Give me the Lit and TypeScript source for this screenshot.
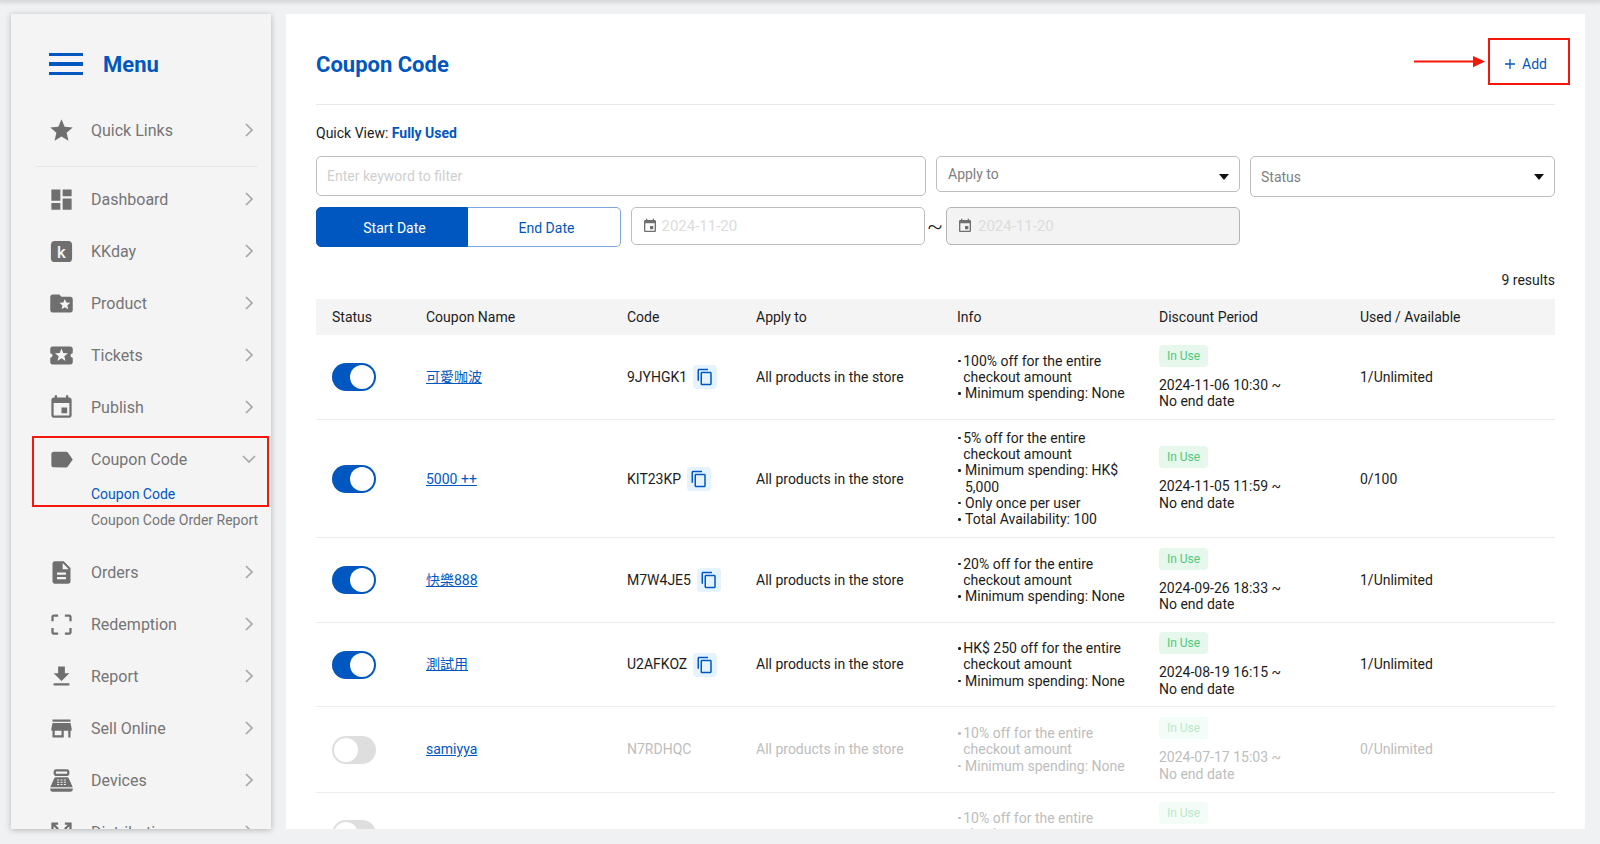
import { LitElement, html, css, svg } from "lit";
import { customElement } from "lit/decorators.js";
import { styleMap } from "lit/directives/style-map.js";

const ICONS: Record<string, unknown> = {
  star: svg`<path d="M12 17.27L18.18 21l-1.64-7.03L22 9.24l-7.19-.61L12 2 9.19 8.63 2 9.24l5.46 4.73L5.82 21z"/>`,
  dashboard: svg`<path d="M3 13h8V3H3v10zm0 8h8v-6H3v6zm10 0h8V11h-8v10zm0-18v6h8V3h-8z"/>`,
  kkday: svg`<rect x="2.6" y="2.6" width="18.8" height="18.8" rx="3.5"/><text x="12" y="17.6" text-anchor="middle" font-family="Roboto, sans-serif" font-weight="500" font-size="15" fill="#f4f4f5">k</text>`,
  product: svg`<path d="M20 6h-8l-2-2H4c-1.1 0-1.99.9-1.99 2L2 18c0 1.1.9 2 2 2h16c1.1 0 2-.9 2-2V8c0-1.1-.9-2-2-2zm-2.06 11L15 15.28 12.06 17l.78-3.33-2.59-2.24 3.41-.29L15 8l1.34 3.14 3.41.29-2.59 2.24.78 3.33z"/>`,
  tickets: svg`<path d="M20 12c0-1.1.9-2 2-2V6c0-1.1-.9-2-2-2H4c-1.1 0-1.99.9-1.99 2v4c1.1 0 1.99.9 1.99 2s-.89 2-2 2v4c0 1.1.9 2 2 2h16c1.1 0 2-.9 2-2v-4c-1.1 0-2-.9-2-2zm-4.42 4.8L12 14.5l-3.58 2.3 1.08-4.12-3.29-2.69 4.24-.25L12 5.8l1.54 3.95 4.24.25-3.29 2.69 1.09 4.11z"/>`,
  event: svg`<path d="M17 12h-5v5h5v-5zM16 1v2H8V1H6v2H5c-1.11 0-1.99.9-1.99 2L3 19c0 1.1.89 2 2 2h14c1.1 0 2-.9 2-2V5c0-1.1-.9-2-2-2h-1V1h-2zm3 18H5V8h14v11z"/>`,
  label: svg`<path d="M17.63 5.84C17.27 5.33 16.67 5 16 5L5 5.01C3.9 5.01 3 5.9 3 7v10c0 1.1.9 1.99 2 1.99L16 19c.67 0 1.27-.33 1.63-.84L22 12l-4.37-6.16z"/>`,
  orders: svg`<path d="M14 2H6c-1.1 0-1.99.9-1.99 2L4 20c0 1.1.89 2 1.99 2H18c1.1 0 2-.9 2-2V8l-6-6zm2 16H8v-2h8v2zm0-4H8v-2h8v2zm-3-5V3.5L18.5 9H13z"/>`,
  crop: svg`<path d="M3 5v4h2V5h4V3H5c-1.1 0-2 .9-2 2zm2 10H3v4c0 1.1.9 2 2 2h4v-2H5v-4zm14 4h-4v2h4c1.1 0 2-.9 2-2v-4h-2v4zm0-16h-4v2h4v4h2V5c0-1.1-.9-2-2-2z"/>`,
  report: svg`<path d="M19 9h-4V3H9v6H5l7 7 7-7zM5 18v2h14v-2H5z"/>`,
  store: svg`<path d="M20 4H4v2h16V4zm1 10v-2l-1-5H4l-1 5v2h1v6h10v-6h4v6h2v-6h1zm-9 4H6v-4h6v4z"/>`,
  devices: svg`<path d="M17 2H7c-1.1 0-2 .9-2 2v2c0 1.1.9 2 2 2h10c1.1 0 2-.9 2-2V4c0-1.1-.9-2-2-2zm0 4H7V4h10v2zm3 16H4c-1.1 0-2-.9-2-2v-1h20v1c0 1.1-.9 2-2 2zM18.53 10.19C18.21 9.47 17.49 9 16.7 9H7.3c-.79 0-1.51.47-1.83 1.19L2 18h20l-3.47-7.81zM9.5 16h-1c-.28 0-.5-.22-.5-.5s.22-.5.5-.5h1c.28 0 .5.22.5.5s-.22.5-.5.5zm0-2h-1c-.28 0-.5-.22-.5-.5s.22-.5.5-.5h1c.28 0 .5.22.5.5s-.22.5-.5.5zm0-2h-1c-.28 0-.5-.22-.5-.5s.22-.5.5-.5h1c.28 0 .5.22.5.5s-.22.5-.5.5zm3 4h-1c-.28 0-.5-.22-.5-.5s.22-.5.5-.5h1c.28 0 .5.22.5.5s-.22.5-.5.5zm0-2h-1c-.28 0-.5-.22-.5-.5s.22-.5.5-.5h1c.28 0 .5.22.5.5s-.22.5-.5.5zm0-2h-1c-.28 0-.5-.22-.5-.5s.22-.5.5-.5h1c.28 0 .5.22.5.5s-.22.5-.5.5zm3 4h-1c-.28 0-.5-.22-.5-.5s.22-.5.5-.5h1c.28 0 .5.22.5.5s-.22.5-.5.5zm0-2h-1c-.28 0-.5-.22-.5-.5s.22-.5.5-.5h1c.28 0 .5.22.5.5s-.22.5-.5.5zm0-2h-1c-.28 0-.5-.22-.5-.5s.22-.5.5-.5h1c.28 0 .5.22.5.5s-.22.5-.5.5z"/>`,
  distribution: svg`<path d="M3 3h6v2H6.4l3.3 3.3-1.4 1.4L5 6.4V9H3V3zm12 0h6v6h-2V6.4l-3.3 3.3-1.4-1.4L17.6 5H15V3zM3 15h2v2.6l3.3-3.3 1.4 1.4L6.4 19H9v2H3v-6zm16 0h2v6h-6v-2h2.6l-3.3-3.3 1.4-1.4 3.3 3.3V15z"/>`,
};

const icon = (n: string) => html`<svg class="ico" viewBox="0 0 24 24" aria-hidden="true">${ICONS[n]}</svg>`;
const chevron = (open = false) =>
  html`<svg class="chev" viewBox="0 0 24 24" aria-hidden="true">
    ${open ? svg`<polyline points="6,9 12,15 18,9"/>` : svg`<polyline points="9,6 15,12 9,18"/>`}
  </svg>`;

interface Row {
  on: boolean;
  name: string;
  code: string;
  info: string[];
  start: string;
  used: string;
  h: number;
}

const rows: Row[] = [
  { on: true, name: "可愛咖波", code: "9JYHGK1", info: ["100% off for the entire checkout amount", "Minimum spending: None"], start: "2024-11-06 10:30", used: "1/Unlimited", h: 85.2 },
  { on: true, name: "5000 ++", code: "KIT23KP", info: ["5% off for the entire checkout amount", "Minimum spending: HK$ 5,000", "Only once per user", "Total Availability: 100"], start: "2024-11-05 11:59", used: "0/100", h: 118 },
  { on: true, name: "快樂888", code: "M7W4JE5", info: ["20% off for the entire checkout amount", "Minimum spending: None"], start: "2024-09-26 18:33", used: "1/Unlimited", h: 84.8 },
  { on: true, name: "測試用", code: "U2AFKOZ", info: ["HK$ 250 off for the entire checkout amount", "Minimum spending: None"], start: "2024-08-19 16:15", used: "1/Unlimited", h: 84.2 },
  { on: false, name: "samiyya", code: "N7RDHQC", info: ["10% off for the entire checkout amount", "Minimum spending: None"], start: "2024-07-17 15:03", used: "0/Unlimited", h: 85.7 },
];

@customElement("app-root")
export class AppRoot extends LitElement {
  static styles = css`
    :host {
      display: block;
      position: relative;
      height: 844px;
      overflow: hidden;
      background: #f0f1f3;
      font-family: Roboto, "Noto Sans CJK TC", sans-serif;
      font-size: 14px;
      color: #1c1c1c;
    }
    .topshade { height: 0; box-shadow: 0 0 4px 2px rgba(0, 0, 0, 0.16); }
    .page {
      display: flex;
      gap: 15px;
      height: 844px;
      box-sizing: border-box;
      padding: 14px 15px 15px 11px;
    }
    .side {
      width: 260px;
      flex: none;
      background: #f4f4f5;
      box-shadow: 0 1px 6px rgba(0, 0, 0, 0.25);
      box-sizing: border-box;
      padding: 24px 15px 0 38px;
      overflow: hidden;
    }
    .menu { display: flex; align-items: center; gap: 20px; height: 52px; margin-bottom: 14px; }
    .burger { width: 34px; display: flex; flex-direction: column; gap: 6px; }
    .burger i { display: block; height: 3.5px; background: #0057bf; }
    .menu b { font-size: 22px; font-weight: 700; color: #0057bf; }
    .item { display: flex; align-items: center; height: 52px; color: #757575; font-size: 16px; }
    .ico { width: 27px; height: 27px; fill: #6f6f6f; flex: none; margin: 0 16.5px 0 -1.5px; }
    .item span { flex: 1; white-space: nowrap; }
    .chev { width: 24px; height: 24px; fill: none; stroke: #a8a8a8; stroke-width: 1.7; flex: none; margin-right: -5px; }
    .rule { height: 1px; background: #e4e4e4; margin: 10px -1px 6px -13px; }
    .subs { margin: -4px -8px 13px 42px; font-size: 14px; color: #757575; }
    .subs div { height: 26px; line-height: 26px; white-space: nowrap; }
    .subs .cur { color: #0057bf; }
    .main {
      flex: 1;
      min-width: 0;
      background: #fff;
      box-sizing: border-box;
      padding: 0 30px;
      overflow: hidden;
    }
    .head {
      display: flex;
      align-items: center;
      justify-content: space-between;
      padding: 37px 0 26px;
      height: 91px;
      box-sizing: border-box;
      border-bottom: 1px solid #e8e8e8;
    }
    .head h1 { margin: 0; font-size: 22px; line-height: 28px; font-weight: 700; color: #0057bf; }
    .add { color: #0057bf; font-size: 14px; padding-right: 8px; display: flex; align-items: center; gap: 6px; margin-top: -1px; }
    .add svg { width: 12px; height: 12px; stroke: #0057bf; stroke-width: 1.3; fill: none; }
    .quick { margin-top: 20px; line-height: 16px; height: 16px; }
    .quick b { color: #0057bf; font-weight: 700; }
    .f1, .f2 { display: flex; gap: 10px; align-items: flex-start; }
    .f1 { margin-top: 15px; height: 41px; }
    .f2 { margin-top: 10px; }
    .box {
      box-sizing: border-box;
      border: 1px solid #bdbdbd;
      border-radius: 5px;
      background: #fff;
      display: flex;
      align-items: center;
    }
    .kw { flex: 1; height: 40px; padding-left: 10px; color: #cfcfcf; }
    .sel { justify-content: space-between; color: #808080; }
    .sel1 { width: 304px; height: 36px; padding: 0 10px 0 11px; }
    .sel2 { width: 305px; height: 41px; padding: 0 10px; }
    .sel svg { width: 10px; height: 6px; fill: #111; }
    .sel1 svg { margin-top: 5px; }
    .sel2 svg { margin-top: 1px; }
    .tabs { display: flex; width: 305px; height: 40px; }
    .tabs div {
      display: flex;
      align-items: center;
      justify-content: center;
      box-sizing: border-box;
      border: 1px solid #0057bf;
      padding-top: 1px;
    }
    .tabs .a { width: 152px; padding-left: 5px; background: #0057bf; color: #fff; border-radius: 5px 0 0 5px; }
    .tabs .b { width: 153px; padding-left: 5px; color: #0057bf; border-left: none; border-color: #7da6dc; border-radius: 0 5px 5px 0; }
    .date { width: 294px; height: 38px; padding-left: 10px; gap: 3.5px; color: #dcdcdc; font-size: 15px; }
    .date svg { width: 16px; height: 16px; fill: #6f6f6f; }
    .date.off { gap: 5px; background: #f3f3f3; border-color: #b5b5b5; }
    .tilde { width: 12px; margin: 0 -5px 0 -6px; height: 38px; display: flex; align-items: center; justify-content: center; font-size: 24px; font-weight: 300; box-sizing: border-box; }
    .count { margin-top: 25px; text-align: right; line-height: 16px; }
    .thead, .row {
      display: grid;
      grid-template-columns: 95px 201px 129px 201px 202px 201px 1fr;
      align-items: center;
    }
    .thead { margin-top: 11px; height: 36px; background: #f4f4f4; }
    .thead > div, .row > div { padding: 0 15px; min-width: 0; }
    .thead > div:first-child, .row > div:first-child { padding-left: 16px; padding-right: 0; }
    .row { box-sizing: border-box; border-bottom: 1px solid #ececec; line-height: 16.3px; padding: 9px 0; }
    .row.off > div { color: #bdbdbd; }
    .toggle {
      box-sizing: border-box;
      display: flex;
      justify-content: flex-end;
      width: 44px;
      height: 28px;
      padding: 2px;
      border-radius: 14px;
      background: #0057bf;
    }
    .toggle i { width: 24px; height: 24px; background: #fff; border-radius: 50%; }
    .toggle.offt { background: #dedede; justify-content: flex-start; }
    a { color: #0057bf; text-decoration: underline; }
    .row.off > div a { color: #0057bf; }
    .code { display: flex; align-items: center; gap: 6px; white-space: nowrap; }
    .copy { width: 24px; height: 24px; border-radius: 4px; background: #e5f3ff; display: flex; align-items: center; justify-content: center; }
    .copy svg { width: 18px; height: 18px; fill: #0057bf; }
    .info { margin: 0; padding: 0; list-style: none; }
    .info li { display: flex; gap: 5px; }
    .info li:first-child { gap: 3.2px; }
    .info em { font-style: normal; flex: none; width: 3px; height: 16.3px; position: relative; }
    .info em::after { content: ""; position: absolute; left: 1px; top: 7px; width: 2.5px; height: 2.5px; border-radius: 50%; background: currentColor; }
    .badge {
      display: flex;
      width: 49px;
      height: 22px;
      align-items: center;
      justify-content: center;
      border-radius: 4px;
      background: #e6f8ec;
      color: #4fc97f;
      font-size: 12px;
      margin-bottom: 10px;
    }
    .row.off .badge { opacity: 0.4; }
    .row.off > div .badge { color: #4fc97f; }
    .over { position: absolute; pointer-events: none; box-sizing: border-box; border: 2px solid #f5160c; }
    .box1 { left: 32px; top: 436px; width: 237px; height: 71px; }
    .box2 { left: 1488px; top: 38px; width: 82px; height: 47px; }
    .arrow { position: absolute; left: 1414px; top: 54px; width: 73px; height: 14px; }
  `;

  private navItem(ic: string, label: string, open = false) {
    return html`<div class="item">${icon(ic)}<span>${label}</span>${chevron(open)}</div>`;
  }

  private renderRow(r: Row) {
    return html`<div class="row ${r.on ? "" : "off"}" style=${styleMap({ minHeight: `${r.h}px` })}>
      <div><div class="toggle ${r.on ? "" : "offt"}"><i></i></div></div>
      <div><a href="#">${r.name}</a></div>
      <div class="code">${r.code}${r.on
        ? html`<span class="copy"><svg viewBox="0 0 24 24"><path d="M16 1H4c-1.1 0-2 .9-2 2v14h2V3h12V1zm3 4H8c-1.1 0-2 .9-2 2v14c0 1.1.9 2 2 2h11c1.1 0 2-.9 2-2V7c0-1.1-.9-2-2-2zm0 16H8V7h11v14z"/></svg></span>`
        : ""}</div>
      <div>All products in the store</div>
      <div><ul class="info">${r.info.map((t) => html`<li><em></em><span>${t}</span></li>`)}</ul></div>
      <div><span class="badge">In Use</span>${r.start} ~<br />No end date</div>
      <div>${r.used}</div>
    </div>`;
  }

  render() {
    return html`
      <div class="topshade"></div>
      <div class="page">
        <nav class="side">
          <div class="menu"><div class="burger"><i></i><i></i><i></i></div><b>Menu</b></div>
          ${this.navItem("star", "Quick Links")}
          <div class="rule"></div>
          ${this.navItem("dashboard", "Dashboard")}
          ${this.navItem("kkday", "KKday")}
          ${this.navItem("product", "Product")}
          ${this.navItem("tickets", "Tickets")}
          ${this.navItem("event", "Publish")}
          ${this.navItem("label", "Coupon Code", true)}
          <div class="subs">
            <div class="cur">Coupon Code</div>
            <div>Coupon Code Order Report</div>
          </div>
          ${this.navItem("orders", "Orders")}
          ${this.navItem("crop", "Redemption")}
          ${this.navItem("report", "Report")}
          ${this.navItem("store", "Sell Online")}
          ${this.navItem("devices", "Devices")}
          ${this.navItem("distribution", "Distribution")}
        </nav>
        <main class="main">
          <header class="head">
            <h1>Coupon Code</h1>
            <div class="add"><svg viewBox="0 0 12 12"><path d="M6 1v10M1 6h10"/></svg>Add</div>
          </header>
          <div class="quick">Quick View: <b>Fully Used</b></div>
          <div class="f1">
            <div class="box kw">Enter keyword to filter</div>
            <div class="box sel sel1">Apply to<svg viewBox="0 0 10 6"><path d="M0 0h10L5 6z"/></svg></div>
            <div class="box sel sel2">Status<svg viewBox="0 0 10 6"><path d="M0 0h10L5 6z"/></svg></div>
          </div>
          <div class="f2">
            <div class="tabs"><div class="a">Start Date</div><div class="b">End Date</div></div>
            <div class="box date"><svg viewBox="0 0 24 24">${ICONS.event}</svg>2024-11-20</div>
            <div class="tilde">~</div>
            <div class="box date off"><svg viewBox="0 0 24 24">${ICONS.event}</svg>2024-11-20</div>
          </div>
          <div class="count">9 results</div>
          <div class="thead">
            <div>Status</div><div>Coupon Name</div><div>Code</div><div>Apply to</div><div>Info</div><div>Discount Period</div><div>Used / Available</div>
          </div>
          ${rows.map((r) => this.renderRow(r))}
          <div class="row off">
            <div><div class="toggle offt"><i></i></div></div>
            <div></div><div></div><div></div>
            <div><ul class="info"><li><em></em><span>10% off for the entire checkout amount</span></li><li><em></em><span>Minimum spending: None</span></li></ul></div>
            <div><span class="badge">In Use</span><br /><br /></div>
            <div></div>
          </div>
        </main>
      </div>
      <div class="over box1"></div>
      <div class="over box2"></div>
      <svg class="arrow" viewBox="0 0 73 14" aria-hidden="true"><path d="M0 6.6h60v2H0z" fill="#f5160c"/><path d="M59 2l12 5.6-12 5.6z" fill="#f5160c"/></svg>
    `;
  }
}
